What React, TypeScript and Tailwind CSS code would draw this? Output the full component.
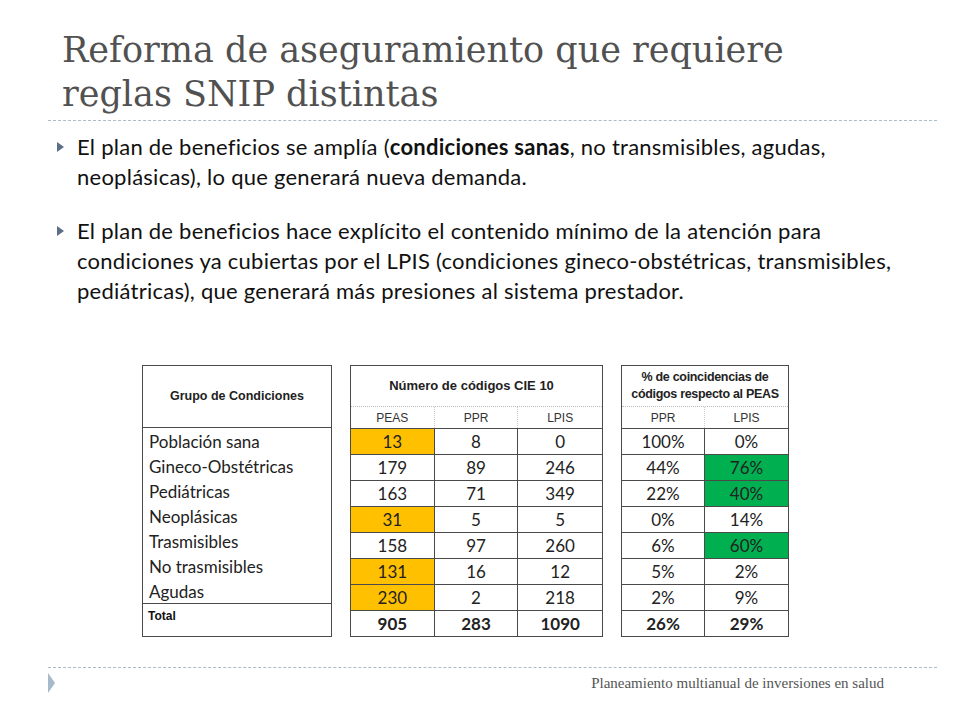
import React from 'react';

type Row = {
  label: string;
  peas: string;
  ppr: string;
  lpis: string;
  pctPpr: string;
  pctLpis: string;
  hiPeas?: boolean;
  hiLpis?: boolean;
};

const rows: Row[] = [
  { label: 'Población sana', peas: '13', ppr: '8', lpis: '0', pctPpr: '100%', pctLpis: '0%', hiPeas: true },
  { label: 'Gineco-Obstétricas', peas: '179', ppr: '89', lpis: '246', pctPpr: '44%', pctLpis: '76%', hiLpis: true },
  { label: 'Pediátricas', peas: '163', ppr: '71', lpis: '349', pctPpr: '22%', pctLpis: '40%', hiLpis: true },
  { label: 'Neoplásicas', peas: '31', ppr: '5', lpis: '5', pctPpr: '0%', pctLpis: '14%', hiPeas: true },
  { label: 'Trasmisibles', peas: '158', ppr: '97', lpis: '260', pctPpr: '6%', pctLpis: '60%', hiLpis: true },
  { label: 'No trasmisibles', peas: '131', ppr: '16', lpis: '12', pctPpr: '5%', pctLpis: '2%', hiPeas: true },
  { label: 'Agudas', peas: '230', ppr: '2', lpis: '218', pctPpr: '2%', pctLpis: '9%', hiPeas: true },
];

const cell = "h-[25px] flex items-center justify-center text-[17px] text-[#222] font-['Lato',sans-serif] leading-none";
const headSmall = "h-[21px] flex items-center justify-center text-[12px] text-[#333] font-['Liberation_Sans',sans-serif]";
const line = 'border-[#4a4a4a]';

function Bullet({ children }: { children: React.ReactNode }) {
  return (
    <div className="flex">
      <svg width="8" height="10" viewBox="0 0 8 10" className="mt-[10px] ml-[57px] mr-[12px] shrink-0">
        <polygon points="0,0 7,5 0,10" fill="#5d6f86" />
      </svg>
      <p className="text-[22px] leading-[30px] tracking-[0.25px] text-[#111] font-['Lato',sans-serif] whitespace-nowrap">{children}</p>
    </div>
  );
}

export default function App() {
  return (
    <div className="w-[960px] h-[720px] bg-white relative overflow-hidden">
      <h1 className="pl-[62px] pt-[28px] text-[35px] leading-[44px] text-[#515151] font-['DejaVu_Serif',serif] font-normal">
        Reforma de aseguramiento que requiere
        <br />
        reglas SNIP distintas
      </h1>
      <div className="ml-[48px] mr-[23px] mt-[4px] border-t border-dashed border-[#a9bccb]" />

      <div className="mt-[11px] flex flex-col gap-[24px]">
        <Bullet>
          El plan de beneficios se amplía (<b>condiciones sanas</b>, no transmisibles, agudas,
          <br />
          neoplásicas), lo que generará nueva demanda.
        </Bullet>
        <Bullet>
          El plan de beneficios hace explícito el contenido mínimo de la atención para
          <br />
          condiciones ya cubiertas por el LPIS (condiciones gineco-obstétricas, transmisibles,
          <br />
          pediátricas), que generará más presiones al sistema prestador.
        </Bullet>
      </div>

      <div className="absolute left-[142px] top-[365px] flex gap-[18px]">
        {/* table 1 */}
        <div className={'w-[190px] border ' + line}>
          <div className={"h-[62px] flex items-center justify-center border-b text-[12.5px] font-bold text-[#222] font-['Liberation_Sans',sans-serif] " + line}>
            Grupo de Condiciones
          </div>
          {rows.map((r) => (
            <div key={r.label} className="h-[25px] flex items-center pl-[6px] pt-[2px] text-[17px] text-[#222] font-['Lato',sans-serif]">
              {r.label}
            </div>
          ))}
          <div className={"h-[24px] flex items-center pl-[5px] border-t text-[12px] font-bold text-[#111] font-['Liberation_Sans',sans-serif] " + line}>
            Total
          </div>
        </div>

        {/* table 2 */}
        <div className={'w-[253px] border ' + line}>
          <div className="h-[41px] flex items-center justify-center pr-[10px] border-b border-dotted border-[#bbb] text-[13px] font-bold text-[#222] font-['Liberation_Sans',sans-serif]">
            Número de códigos CIE 10
          </div>
          <div className="grid grid-cols-3">
            <div className={headSmall + ' border-r border-dotted border-[#ccc]'}>PEAS</div>
            <div className={headSmall + ' border-r border-dotted border-[#ccc]'}>PPR</div>
            <div className={headSmall}>LPIS</div>
          </div>
          {rows.map((r) => (
            <div key={r.label} className={'grid grid-cols-3 border-t ' + line}>
              <div className={cell + ' border-r ' + line + (r.hiPeas ? ' bg-[#ffc000]' : '')}>{r.peas}</div>
              <div className={cell + ' border-r ' + line}>{r.ppr}</div>
              <div className={cell}>{r.lpis}</div>
            </div>
          ))}
          <div className={'grid grid-cols-3 border-t ' + line}>
            <div className={cell + ' h-[23px] font-bold border-r ' + line}>905</div>
            <div className={cell + ' h-[23px] font-bold border-r ' + line}>283</div>
            <div className={cell + ' h-[23px] font-bold'}>1090</div>
          </div>
        </div>

        {/* table 3 */}
        <div className={'w-[168px] border ' + line}>
          <div className="h-[41px] flex flex-col items-center justify-center border-b border-dotted border-[#bbb] text-[12.5px] leading-[17px] font-bold text-[#222] font-['Liberation_Sans',sans-serif] tracking-tight text-center">
            <span>% de coincidencias de</span>
            <span>códigos respecto al PEAS</span>
          </div>
          <div className="grid grid-cols-2">
            <div className={headSmall + ' border-r border-dotted border-[#ccc]'}>PPR</div>
            <div className={headSmall}>LPIS</div>
          </div>
          {rows.map((r) => (
            <div key={r.label} className={'grid grid-cols-2 border-t ' + line}>
              <div className={cell + ' border-r ' + line}>{r.pctPpr}</div>
              <div className={cell + (r.hiLpis ? ' bg-[#00b050]' : '')}>{r.pctLpis}</div>
            </div>
          ))}
          <div className={'grid grid-cols-2 border-t ' + line}>
            <div className={cell + ' h-[23px] font-bold border-r ' + line}>26%</div>
            <div className={cell + ' h-[23px] font-bold'}>29%</div>
          </div>
        </div>
      </div>

      <div className="absolute left-[48px] right-[23px] top-[667px] border-t border-dashed border-[#a9bccb]" />
      <svg width="8" height="20" viewBox="0 0 8 20" className="absolute left-[48px] top-[673px]">
        <polygon points="0,0 7,10 0,20" fill="#a7bacb" />
      </svg>
      <div className="absolute right-[76px] top-[672px] text-[15px] text-[#555] font-['Liberation_Serif',serif]">
        Planeamiento multianual de inversiones en salud
      </div>
    </div>
  );
}
